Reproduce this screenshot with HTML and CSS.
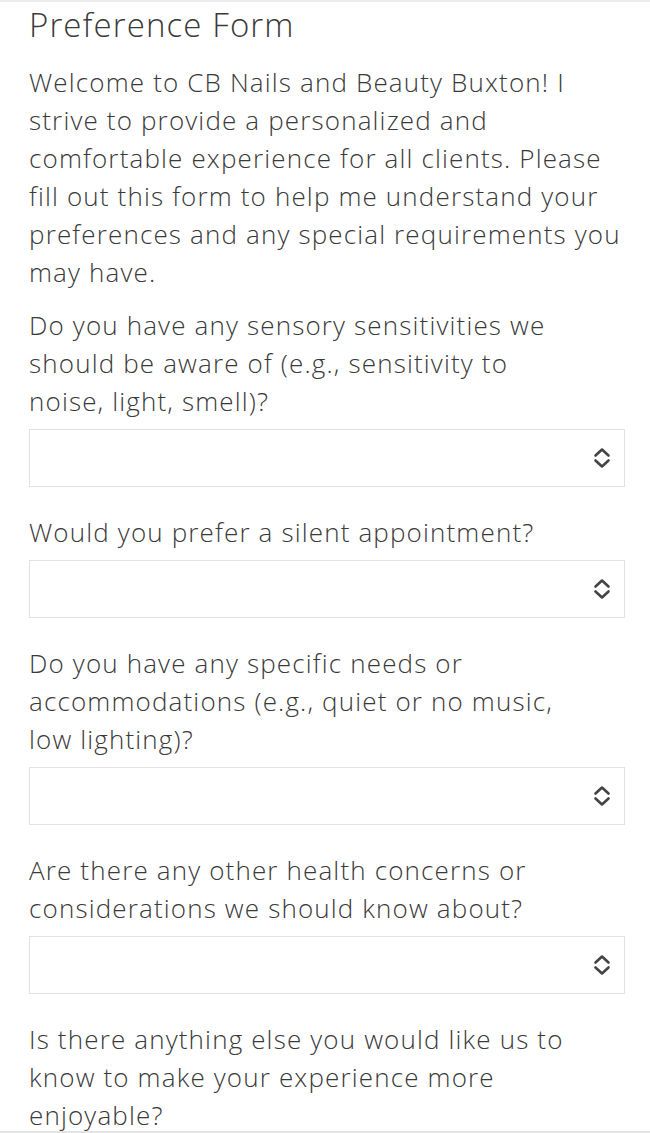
FILE: index.html
```html
<!DOCTYPE html>
<html>
<head>
<meta charset="utf-8">
<link rel="stylesheet" href="styles.css">
</head>
<body>
<div class="page">
  <h1 class="title">Preference Form</h1>
  <p class="intro">Welcome to CB Nails and Beauty Buxton! I strive to provide a personalized and comfortable experience for all clients. Please fill out this form to help me understand your preferences and any special requirements you may have.</p>

  <div class="field">
    <label class="question">Do you have any sensory sensitivities we should be aware of (e.g., sensitivity to noise, light, smell)?</label>
    <div class="select"><svg class="chev" viewBox="0 0 20 22" width="20" height="22"><path d="M3.5 8.5 L10 2.5 L16.5 8.5 M3.5 13.5 L10 19.5 L16.5 13.5" fill="none" stroke="#444" stroke-width="2.6" stroke-linecap="round" stroke-linejoin="round"/></svg></div>
  </div>

  <div class="field">
    <label class="question">Would you prefer a silent appointment?</label>
    <div class="select"><svg class="chev" viewBox="0 0 20 22" width="20" height="22"><path d="M3.5 8.5 L10 2.5 L16.5 8.5 M3.5 13.5 L10 19.5 L16.5 13.5" fill="none" stroke="#444" stroke-width="2.6" stroke-linecap="round" stroke-linejoin="round"/></svg></div>
  </div>

  <div class="field">
    <label class="question">Do you have any specific needs or accommodations (e.g., quiet or no music, low lighting)?</label>
    <div class="select"><svg class="chev" viewBox="0 0 20 22" width="20" height="22"><path d="M3.5 8.5 L10 2.5 L16.5 8.5 M3.5 13.5 L10 19.5 L16.5 13.5" fill="none" stroke="#444" stroke-width="2.6" stroke-linecap="round" stroke-linejoin="round"/></svg></div>
  </div>

  <div class="field">
    <label class="question">Are there any other health concerns or considerations we should know about?</label>
    <div class="select"><svg class="chev" viewBox="0 0 20 22" width="20" height="22"><path d="M3.5 8.5 L10 2.5 L16.5 8.5 M3.5 13.5 L10 19.5 L16.5 13.5" fill="none" stroke="#444" stroke-width="2.6" stroke-linecap="round" stroke-linejoin="round"/></svg></div>
  </div>

  <div class="field">
    <label class="question">Is there anything else you would like us to know to make your experience more enjoyable?</label>
  </div>
</div>
</body>
</html>
```

FILE: styles.css
```css
html, body {
  margin: 0;
  padding: 0;
  background: #fff;
}
body {
  font-family: "Open Sans", "Liberation Sans", sans-serif;
  color: #3a3a3a;
  height: 1133px;
  overflow: hidden;
  border-top: 2px solid #ececec;
  border-bottom: 2px solid #e4e4e4;
  box-sizing: border-box;
}
.page {
  padding: 0 25px 0 29px;
}
.title {
  margin: 0 0 16px;
  padding-top: 1px;
  font-weight: 300;
  font-size: 33px;
  letter-spacing: 1.1px;
  line-height: 44px;
}
.intro {
  margin: 0;
  font-weight: 300;
  font-size: 26px;
  letter-spacing: 1.15px;
  line-height: 38px;
}
.field {
  margin-top: 15px;
}
.field + .field {
  margin-top: 26px;
}
.question {
  display: block;
  font-weight: 300;
  font-size: 26px;
  letter-spacing: 1.15px;
  line-height: 38px;
  max-width: 540px;
}
.select {
  margin-top: 9px;
  height: 58px;
  border: 1px solid #e2e2e2;
  box-sizing: border-box;
  display: flex;
  align-items: center;
  justify-content: flex-end;
  padding-right: 12px;
}
.chev {
  display: block;
}
```
